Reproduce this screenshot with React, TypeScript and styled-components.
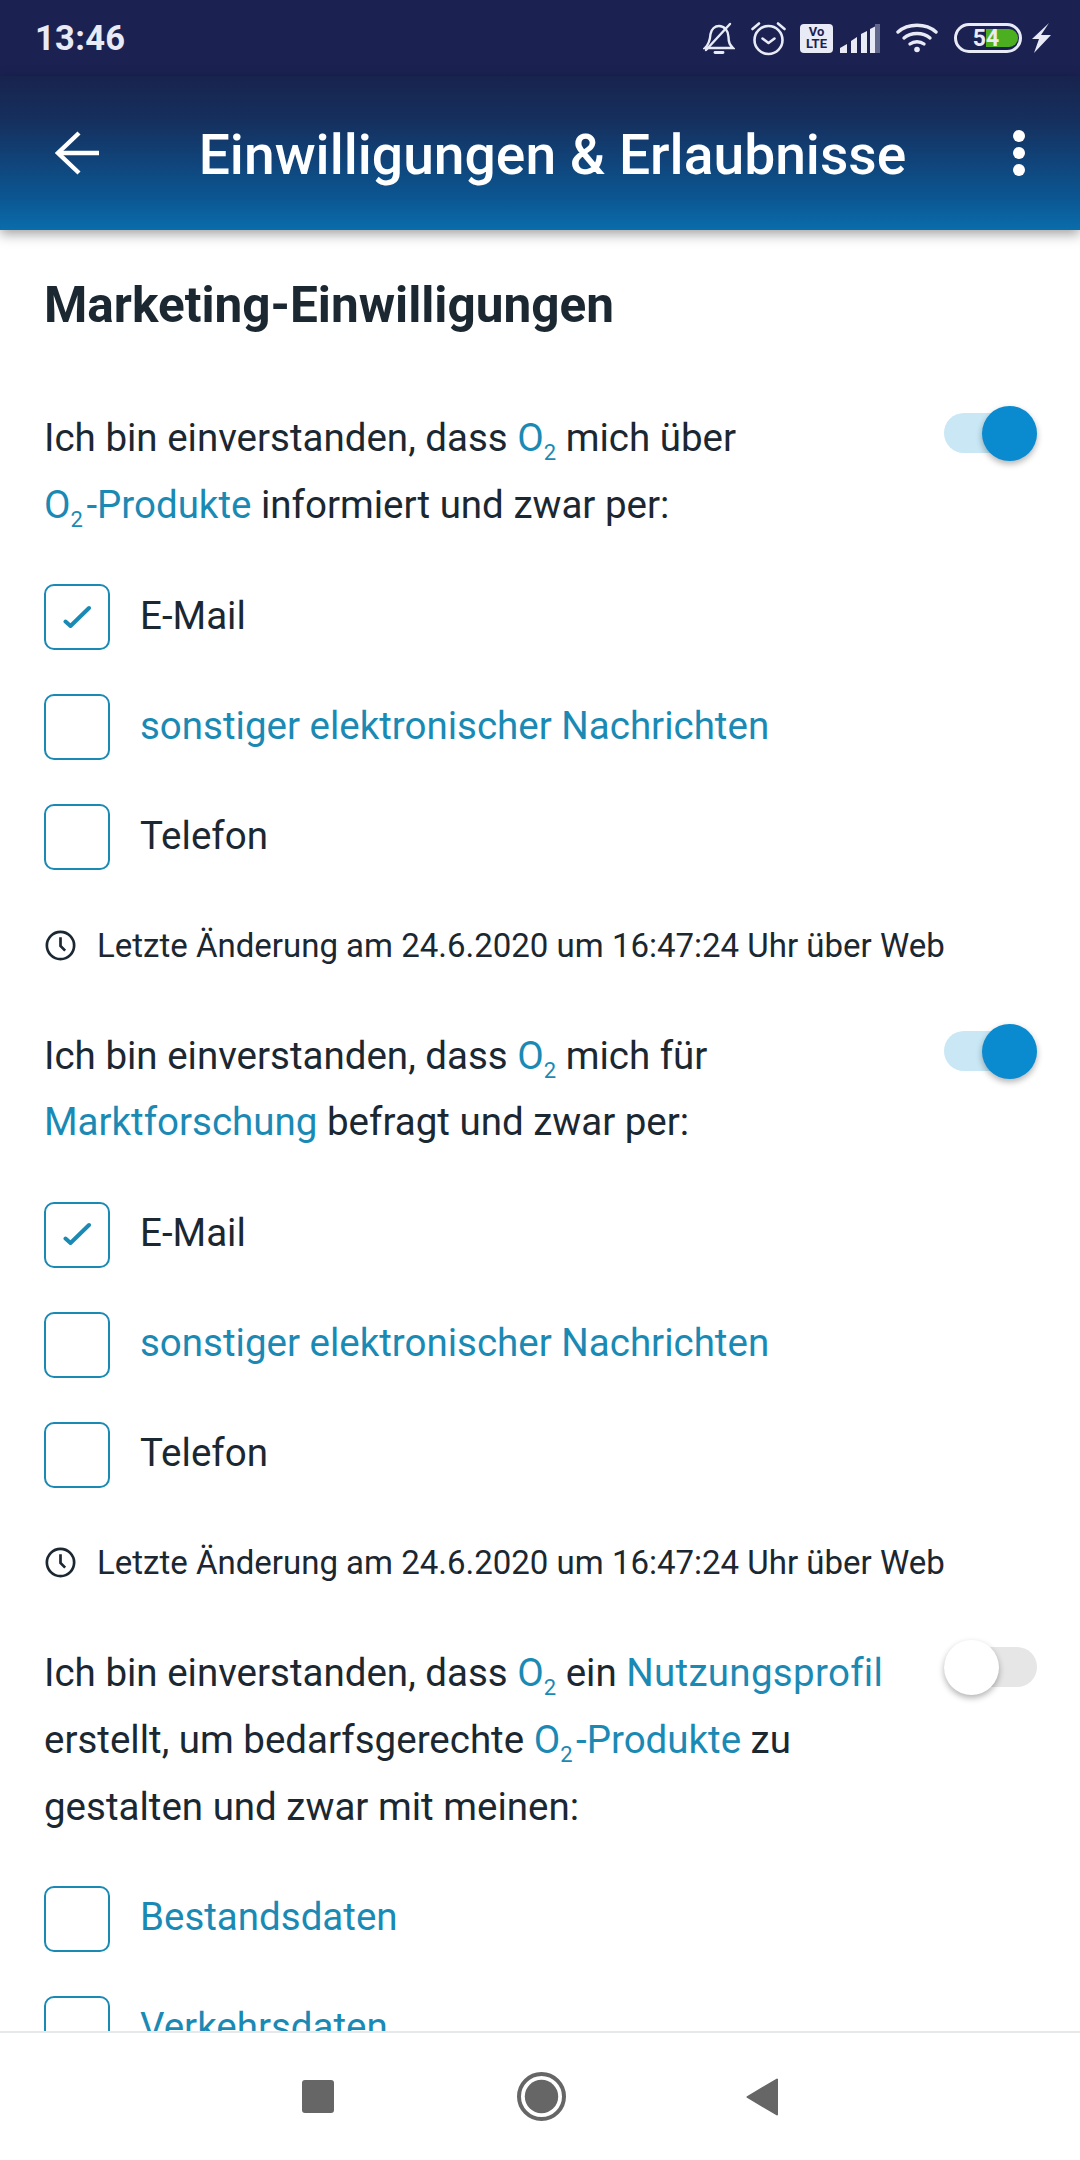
import React from 'react';
import styled, { createGlobalStyle } from 'styled-components';

const GlobalStyle = createGlobalStyle`
  html, body {
    margin: 0;
    padding: 0;
    background: #fff;
  }
  * {
    box-sizing: border-box;
  }
`;

const Page = styled.div`
  width: 1080px;
  height: 2160px;
  display: flex;
  flex-direction: column;
  overflow: hidden;
  font-family: Roboto, 'Liberation Sans', sans-serif;
  font-variant-ligatures: none;
  color: #1b2731;
`;

const StatusBar = styled.div`
  height: 76px;
  flex: none;
  display: flex;
  align-items: center;
  justify-content: space-between;
  padding: 0 29px 0 35px;
  background: #1b2252;
  color: #e8eaf6;
`;

const Time = styled.span`
  font-size: 34.5px;
  font-weight: 700;
  letter-spacing: 0.3px;
`;

const StatusIcons = styled.div`
  display: flex;
  align-items: center;
`;

const StatusIcon = styled.svg<{ $gap?: number }>`
  display: block;
  margin-left: ${(p) => p.$gap ?? 0}px;
`;

const VoLte = styled.div`
  width: 33px;
  height: 29px;
  margin-left: 14px;
  border-radius: 4px;
  background: #e8eaf6;
  color: #1b2252;
  display: flex;
  flex-direction: column;
  align-items: center;
  justify-content: center;
  font-size: 13px;
  font-weight: 700;
  line-height: 12px;
`;

const Battery = styled.div`
  position: relative;
  width: 68px;
  height: 30px;
  margin-left: 16px;
  border: 3px solid #e8eaf6;
  border-radius: 15px;
  display: flex;
  align-items: center;
  justify-content: center;
  font-size: 23px;
  font-weight: 700;
  color: #e8eaf6;
`;

const BatteryFill = styled.div`
  position: absolute;
  top: 3px;
  right: 1px;
  bottom: 3px;
  width: 32px;
  border-radius: 0 10px 10px 0;
  background: #4caf20;
`;

const BatteryText = styled.span`
  position: relative;
  margin-right: 4px;
`;

const Header = styled.header`
  position: relative;
  z-index: 1;
  height: 154px;
  flex: none;
  display: flex;
  align-items: center;
  justify-content: space-between;
  padding: 0 55px 0 55px;
  background: linear-gradient(180deg, #18234d 0%, #15305f 30%, #0b5793 80%, #0a6dab 100%);
  box-shadow: 0 4px 12px rgba(0, 0, 0, 0.38);
  color: #fff;
`;

const HeaderTitle = styled.h1`
  margin: 4px 0 0 -7px;
  font-size: 55.2px;
  font-weight: 500;
  line-height: 60px;
  white-space: nowrap;
`;

const Main = styled.main`
  flex: 1;
  min-height: 0;
  overflow: hidden;
  padding: 45px 43px 0 44px;
`;

const SectionTitle = styled.h2`
  margin: 0 0 70.2px;
  font-size: 49.5px;
  font-weight: 700;
  line-height: 60px;
  color: #1b2731;
`;

const Consent = styled.section`
  margin-bottom: 57.6px;
`;

const ConsentHead = styled.div`
  display: flex;
  justify-content: space-between;
  align-items: flex-start;
  margin-bottom: 45.5px;
`;

const ConsentText = styled.p`
  margin: 0;
  font-size: 38.5px;
  line-height: 66.7px;
  font-weight: 400;
  white-space: nowrap;
`;

const Link = styled.span`
  color: #1a8ab5;

  sub {
    font-size: 22px;
    line-height: 0;
    vertical-align: -8.5px;
  }
`;

const ProfileLink = styled(Link)`
  letter-spacing: 0.3px;
`;

const ProductSuffix = styled.span`
  padding-left: 3.5px;
`;

const Toggle = styled.div<{ $on: boolean }>`
  position: relative;
  width: 93px;
  height: 40px;
  margin-top: ${(p) => (p.$on ? 8 : 7)}px;
  border-radius: 20px;
  background: ${(p) => (p.$on ? '#c9e7f5' : '#e6e6e6')};
`;

const Knob = styled.div<{ $on: boolean }>`
  position: absolute;
  top: -7px;
  ${(p) => (p.$on ? 'right: 0;' : 'left: 0;')}
  width: 55px;
  height: 55px;
  border-radius: 50%;
  background: ${(p) => (p.$on ? '#0a8bd0' : '#fff')};
  box-shadow: 0 3px 6px rgba(0, 0, 0, 0.3);
`;

const Options = styled.div`
  display: flex;
  flex-direction: column;
  gap: 44px;
`;

const Option = styled.div`
  display: flex;
  align-items: center;
  gap: 30px;
  height: 66px;
`;

const CheckBox = styled.div`
  width: 66px;
  height: 66px;
  flex: none;
  border: 2.4px solid #1a8ab5;
  border-radius: 10px;
  display: flex;
  align-items: center;
  justify-content: center;
`;

const OptionLabel = styled.span<{ $link?: boolean }>`
  margin-top: -3px;
  font-size: 38.5px;
  line-height: 44px;
  color: ${(p) => (p.$link ? '#1a8ab5' : '#1b2731')};
`;

const ChangeNote = styled.div`
  display: flex;
  align-items: center;
  gap: 21px;
  height: 40px;
  margin: 55px 0 0 1px;
  font-size: 33px;
  white-space: nowrap;
`;

const NavBar = styled.nav`
  height: 129px;
  flex: none;
  display: flex;
  align-items: center;
  justify-content: center;
  gap: 183px;
  border-top: 2px solid #e6e8ea;
  background: #fff;
`;

const BackTriangle = styled.svg`
  margin-left: -3px;
`;

const O2 = () => (
  <Link>
    O<sub>2</sub>
  </Link>
);

const O2Products = () => (
  <Link>
    O<sub>2</sub>
    <ProductSuffix>-Produkte</ProductSuffix>
  </Link>
);

const CheckMark = () => (
  <svg width="28" height="25" viewBox="0 0 28 25" fill="none">
    <path d="M2.500 16.500l5 4.500L26 3" stroke="#1a8ab5" strokeWidth="4" strokeLinecap="round" strokeLinejoin="round" />
  </svg>
);

const ClockIcon = () => (
  <svg width="31" height="31" viewBox="0 0 30 30" fill="none" stroke="#1b2731">
    <circle cx="15" cy="15" r="13.2" strokeWidth="2.6" />
    <path d="M15 7v8.5l4.5 4.5" strokeWidth="2.6" />
  </svg>
);

type OptionData = { label: string; link?: boolean; checked?: boolean };

const contactOptions: OptionData[] = [
  { label: 'E-Mail', checked: true },
  { label: 'sonstiger elektronischer Nachrichten', link: true },
  { label: 'Telefon' },
];

const profileOptions: OptionData[] = [
  { label: 'Bestandsdaten', link: true },
  { label: 'Verkehrsdaten', link: true },
];

const OptionList: React.FC<{ options: OptionData[] }> = ({ options }) => (
  <Options>
    {options.map((option) => (
      <Option key={option.label}>
        <CheckBox>{option.checked && <CheckMark />}</CheckBox>
        <OptionLabel $link={option.link}>{option.label}</OptionLabel>
      </Option>
    ))}
  </Options>
);

const Note = () => (
  <ChangeNote>
    <ClockIcon />
    Letzte Änderung am 24.6.2020 um 16:47:24 Uhr über Web
  </ChangeNote>
);

const ConsentToggle: React.FC<{ on: boolean }> = ({ on }) => (
  <Toggle $on={on}>
    <Knob $on={on} />
  </Toggle>
);

export default function App() {
  return (
    <Page>
      <GlobalStyle />
      <StatusBar>
        <Time>13:46</Time>
        <StatusIcons>
          <StatusIcon width="32" height="32" viewBox="0 0 32 32" fill="none" stroke="#e8eaf6" strokeWidth="2.4" strokeLinecap="round">
            <path d="M2 26h28c-3-3-4.500-5-4.500-11 0-6-4-11-9.500-11C12 4 8.500 7 7.500 12 7 19 5 23 2 26z" />
            <path d="M3 28L27 2" />
            <path d="M12 30.500h8" strokeWidth="2.800" />
          </StatusIcon>
          <StatusIcon $gap={16} width="35" height="35" viewBox="0 0 35 35" fill="none" stroke="#e8eaf6" strokeWidth="2.600" strokeLinecap="round" strokeLinejoin="round">
            <circle cx="17.500" cy="19" r="14" />
            <path d="M11.500 17.500l6 4.500 6-4.500" />
            <path d="M1.500 8L8 2.500M33.500 8L27 2.500" />
          </StatusIcon>
          <VoLte>
            <span>Vo</span>
            <span>LTE</span>
          </VoLte>
          <StatusIcon $gap={7} width="40" height="29" viewBox="0 0 40 29" fill="#e8eaf6">
            <path d="M0 29v-5l7-4v9z" />
            <path d="M11 29V17l6-4v16z" />
            <path d="M21 29V10l6-3v22z" />
            <path d="M30 29V5l5-2.500V29z" />
            <path d="M35 29V0l5 0v29z" opacity="0.35" />
          </StatusIcon>
          <StatusIcon $gap={16} width="42" height="30" viewBox="0 0 42 30" fill="none" stroke="#e8eaf6" strokeWidth="3.400" strokeLinecap="round">
            <path d="M2 9C12 0 30 0 40 9" />
            <path d="M8 15c7-6 19-6 26 0" />
            <path d="M14 21c4-3 10-3 14 0" />
            <circle cx="21" cy="26.500" r="2.800" fill="#e8eaf6" stroke="none" />
          </StatusIcon>
          <Battery>
            <BatteryFill />
            <BatteryText>54</BatteryText>
          </Battery>
          <StatusIcon $gap={10} width="19" height="30" viewBox="0 0 19 30" fill="#e8eaf6">
            <path d="M17 0L9 12h10L2 30l5-14H0z" />
          </StatusIcon>
        </StatusIcons>
      </StatusBar>

      <Header>
        <svg width="44" height="44" viewBox="0 0 44 44" fill="none" stroke="#fff" strokeWidth="4.400">
          <path d="M44 22H4" />
          <path d="M24 2L3 22l21 20" />
        </svg>
        <HeaderTitle>Einwilligungen &amp; Erlaubnisse</HeaderTitle>
        <svg width="12" height="46" viewBox="0 0 12 46" fill="#fff">
          <circle cx="6" cy="6" r="6" />
          <circle cx="6" cy="23" r="6" />
          <circle cx="6" cy="40" r="6" />
        </svg>
      </Header>

      <Main>
        <SectionTitle>Marketing-Einwilligungen</SectionTitle>

        <Consent>
          <ConsentHead>
            <ConsentText>
              Ich bin einverstanden, dass <O2 /> mich über
              <br />
              <O2Products /> informiert und zwar per:
            </ConsentText>
            <ConsentToggle on />
          </ConsentHead>
          <OptionList options={contactOptions} />
          <Note />
        </Consent>

        <Consent>
          <ConsentHead>
            <ConsentText>
              Ich bin einverstanden, dass <O2 /> mich für
              <br />
              <Link>Marktforschung</Link> befragt und zwar per:
            </ConsentText>
            <ConsentToggle on />
          </ConsentHead>
          <OptionList options={contactOptions} />
          <Note />
        </Consent>

        <Consent>
          <ConsentHead>
            <ConsentText>
              Ich bin einverstanden, dass <O2 /> ein <ProfileLink>Nutzungsprofil</ProfileLink>
              <br />
              erstellt, um bedarfsgerechte <O2Products /> zu
              <br />
              gestalten und zwar mit meinen:
            </ConsentText>
            <ConsentToggle on={false} />
          </ConsentHead>
          <OptionList options={profileOptions} />
        </Consent>
      </Main>

      <NavBar>
        <svg width="32" height="33" viewBox="0 0 32 33" fill="#666">
          <rect width="32" height="33" rx="3" />
        </svg>
        <svg width="49" height="49" viewBox="0 0 49 49">
          <circle cx="24.500" cy="24.500" r="22.500" fill="none" stroke="#666" strokeWidth="4" />
          <circle cx="24.500" cy="24.500" r="16.700" fill="#666" />
        </svg>
        <BackTriangle width="32" height="38" viewBox="0 0 32 38" fill="#666" stroke="#666" strokeWidth="2" strokeLinejoin="round">
          <path d="M1.500 19L31 1.500v35z" />
        </BackTriangle>
      </NavBar>
    </Page>
  );
}
